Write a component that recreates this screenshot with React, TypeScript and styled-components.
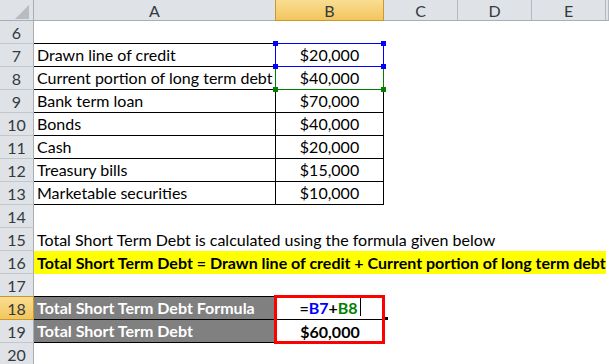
import React from 'react';
import styled, { createGlobalStyle, css } from 'styled-components';

const GlobalStyle = createGlobalStyle`
  html, body {
    margin: 0;
    padding: 0;
    background: #ffffff;
    overflow: hidden;
  }
`;

const FONT = `Lato, "Open Sans", "Liberation Sans", sans-serif`;

const Sheet = styled.div`
  display: grid;
  grid-template-columns: 34px 242px 108px 74px 74px 74px 1fr;
  grid-template-rows: 21px repeat(15, 23px);
  width: 609px;
  height: 364px;
  overflow: hidden;
  font-family: ${FONT};
  font-size: 16px;
  color: #000;
`;

const headBase = css`
  box-sizing: border-box;
  display: flex;
  align-items: center;
  justify-content: center;
  color: #333a40;
  font-size: 16px;
`;

const Corner = styled.div`
  ${headBase};
  grid-row: 1;
  grid-column: 1;
  position: relative;
  background: #dfe3e8;
  border-right: 1px solid #a9aeb4;
  border-bottom: 1px solid #a9aeb4;
`;

const CornerMark = styled.svg`
  position: absolute;
  right: 4px;
  bottom: 1px;
`;

const ColHead = styled.div<{ $col: number; $active?: boolean }>`
  ${headBase};
  grid-row: 1;
  grid-column: ${(p) => p.$col};
  background: ${(p) => (p.$active ? 'linear-gradient(#f9dd92, #f3c65d)' : '#dfe3e8')};
  border-right: 1px solid ${(p) => (p.$active ? '#c9982f' : '#b4b9bf')};
  border-bottom: 1px solid ${(p) => (p.$active ? '#c9982f' : '#a9aeb4')};
  ${(p) => p.$active && 'border-left: 1px solid #c9982f; margin-left: -1px;'}
`;

const RowHead = styled.div<{ $row: number; $active?: boolean }>`
  ${headBase};
  grid-row: ${(p) => p.$row};
  grid-column: 1;
  background: ${(p) => (p.$active ? 'linear-gradient(#f9dd92, #f3c65d)' : '#dfe3e8')};
  border-right: 1px solid ${(p) => (p.$active ? '#c9982f' : '#a9aeb4')};
  border-bottom: 1px solid ${(p) => (p.$active ? '#c9982f' : '#c3c7cc')};
  ${(p) => p.$active && 'border-top: 1px solid #c9982f; margin-top: -1px;'}
`;

const Cell = styled.div<{
  $row: number;
  $col: number;
  $span?: number;
  $center?: boolean;
  $bold?: boolean;
  $fill?: string;
  $ink?: string;
  $right?: boolean;
  $bottom?: boolean;
}>`
  box-sizing: border-box;
  grid-row: ${(p) => p.$row};
  grid-column: ${(p) => p.$col} / span ${(p) => p.$span ?? 1};
  display: flex;
  align-items: flex-end;
  justify-content: ${(p) => (p.$center ? 'center' : 'flex-start')};
  padding: 0 3px 2px 3px;
  white-space: nowrap;
  overflow: visible;
  position: relative;
  font-weight: ${(p) => (p.$bold ? 700 : 400)};
  color: ${(p) => p.$ink ?? '#000'};
  background: ${(p) => p.$fill ?? 'transparent'};
  border-right: ${(p) => (p.$right ? '1px solid #000' : 'none')};
  border-bottom: ${(p) => (p.$bottom ? '1px solid #000' : 'none')};
`;

const Ref = styled.span<{ $ink: string }>`
  color: ${(p) => p.$ink};
`;

const Caret = styled.span`
  display: inline-block;
  width: 1px;
  height: 18px;
  background: #000;
  margin-left: 2px;
  align-self: center;
`;

const Selection = styled.div<{ $row: number; $color: string }>`
  grid-row: ${(p) => p.$row};
  grid-column: 3;
  margin: -1px 0 0 -1px;
  border: 1px solid ${(p) => p.$color};
  position: relative;
  pointer-events: none;
`;

const Handle = styled.span<{ $color: string; $x: 'l' | 'r'; $y: 't' | 'b' }>`
  position: absolute;
  width: 5px;
  height: 5px;
  background: ${(p) => p.$color};
  ${(p) => (p.$x === 'l' ? 'left: -3px;' : 'right: -3px;')}
  ${(p) => (p.$y === 't' ? 'top: -3px;' : 'bottom: -3px;')}
`;

const RedBox = styled.div`
  grid-row: 14 / span 2;
  grid-column: 3;
  margin: -2px -1px -1px -2px;
  border: 3px solid #ff0000;
  position: relative;
  pointer-events: none;
`;

const FillHandle = styled.span`
  position: absolute;
  right: -6px;
  top: 19px;
  width: 3px;
  height: 3px;
  background: #000;
`;

const items = [
  ['Drawn line of credit', '$20,000'],
  ['Current portion of long term debt', '$40,000'],
  ['Bank term loan', '$70,000'],
  ['Bonds', '$40,000'],
  ['Cash', '$20,000'],
  ['Treasury bills', '$15,000'],
  ['Marketable securities', '$10,000'],
];

// sheet row number -> grid row
const gr = (n: number) => n - 4;

export default function App() {
  const rowNums = Array.from({ length: 15 }, (_, i) => i + 6);
  return (
    <>
      <GlobalStyle />
      <Sheet>
        <Corner>
          <CornerMark width="14" height="14" viewBox="0 0 14 14">
            <polygon points="14,0 14,14 0,14" fill="#b8bcc1" />
          </CornerMark>
        </Corner>
        {['A', 'B', 'C', 'D', 'E', ''].map((c, i) => (
          <ColHead key={i} $col={i + 2} $active={c === 'B'}>
            {c}
          </ColHead>
        ))}
        {rowNums.map((n) => (
          <RowHead key={n} $row={gr(n)} $active={n === 18}>
            {n}
          </RowHead>
        ))}

        <Cell $row={gr(6)} $col={2} $bottom />
        <Cell $row={gr(6)} $col={3} $bottom />
        {items.map(([label, value], i) => (
          <React.Fragment key={label}>
            <Cell $row={gr(7 + i)} $col={2} $right $bottom>
              {label}
            </Cell>
            <Cell $row={gr(7 + i)} $col={3} $right $bottom $center>
              {value}
            </Cell>
          </React.Fragment>
        ))}

        <Cell $row={gr(15)} $col={2}>
          Total Short Term Debt is calculated using the formula given below
        </Cell>
        <Cell $row={gr(16)} $col={2} $span={5} $bold $fill="#ffff00">
          Total Short Term Debt = Drawn line of credit + Current portion of long term debt
        </Cell>

        <Cell $row={gr(17)} $col={2} $bottom />
        <Cell $row={gr(18)} $col={2} $bold $fill="#808080" $ink="#ffffff" $bottom>
          Total Short Term Debt Formula
        </Cell>
        <Cell $row={gr(18)} $col={3} $bold $center $bottom>
          =<Ref $ink="#0000ff">B7</Ref>+<Ref $ink="#008000">B8</Ref>
          <Caret />
        </Cell>
        <Cell $row={gr(19)} $col={2} $bold $fill="#808080" $ink="#ffffff" $bottom>
          Total Short Term Debt
        </Cell>
        <Cell $row={gr(19)} $col={3} $bold $center>
          $60,000
        </Cell>

        <Selection $row={gr(8)} $color="#008000">
          <Handle $color="#008000" $x="l" $y="b" />
          <Handle $color="#008000" $x="r" $y="b" />
        </Selection>
        <Selection $row={gr(7)} $color="#0000ff">
          <Handle $color="#0000ff" $x="l" $y="t" />
          <Handle $color="#0000ff" $x="r" $y="t" />
          <Handle $color="#0000ff" $x="l" $y="b" />
          <Handle $color="#0000ff" $x="r" $y="b" />
        </Selection>
        <RedBox>
          <FillHandle />
        </RedBox>
      </Sheet>
    </>
  );
}
